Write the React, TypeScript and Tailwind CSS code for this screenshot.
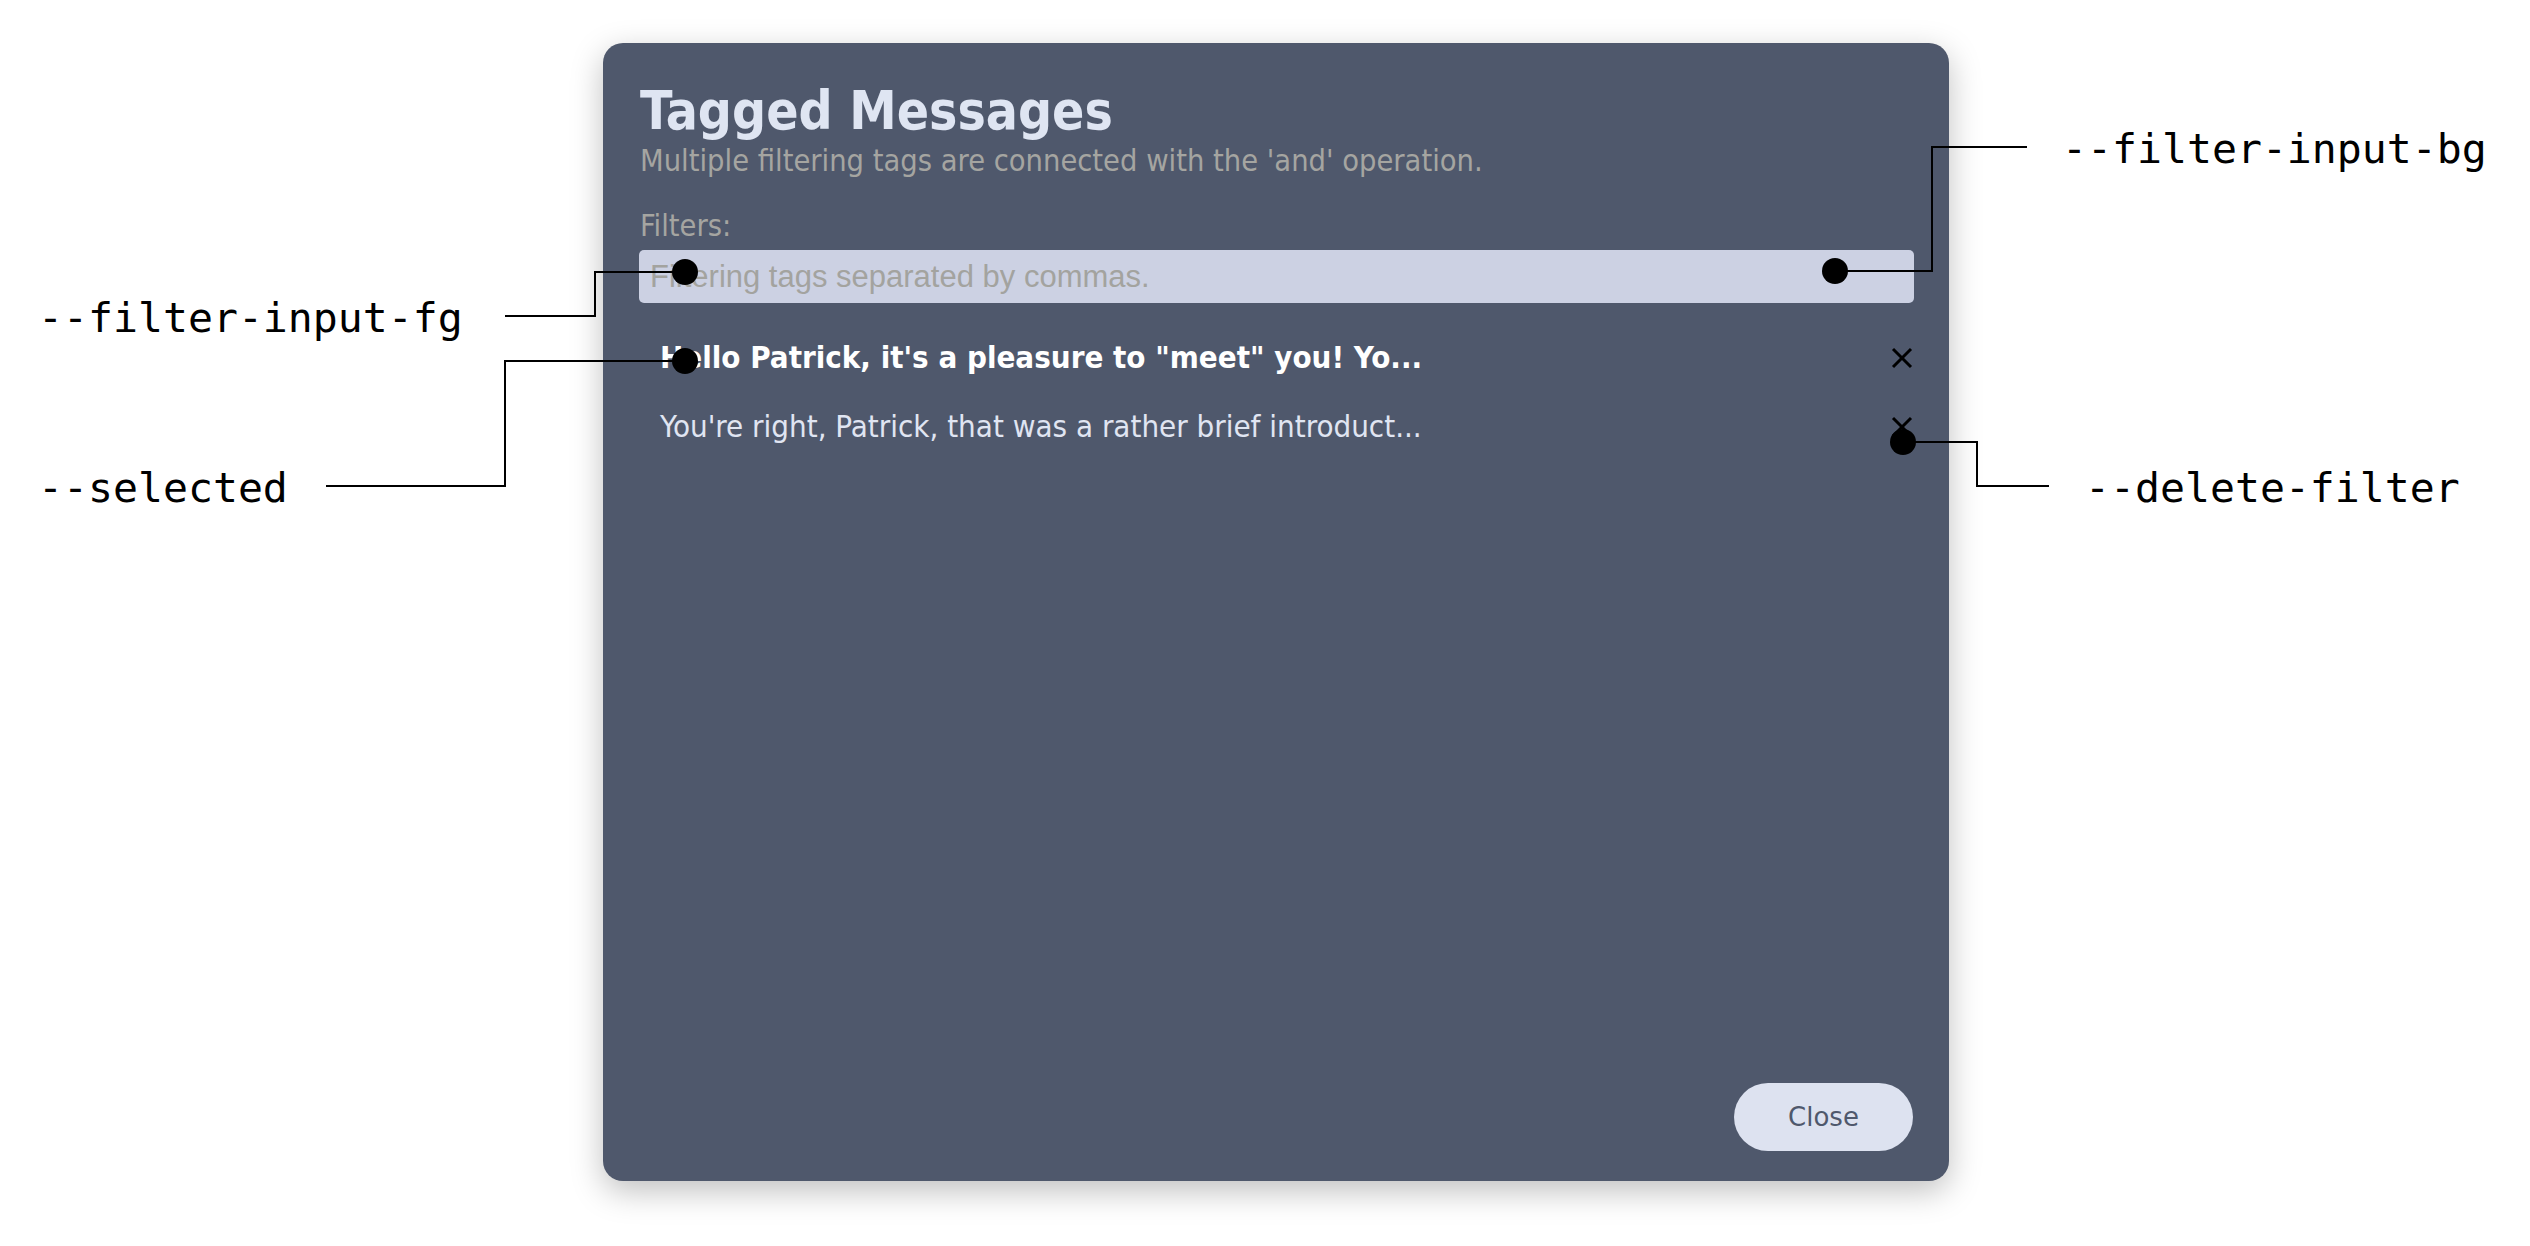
import React from "react";

const COND = "font-['DejaVu_Sans',sans-serif] [font-stretch:condensed]";

function XIcon() {
  return (
    <svg width="22" height="22" viewBox="0 0 22 22" className="block">
      <line x1="2" y1="2" x2="20" y2="20" stroke="#000" strokeWidth="3" />
      <line x1="20" y1="2" x2="2" y2="20" stroke="#000" strokeWidth="3" />
    </svg>
  );
}

function Row({ text, bold }: { text: string; bold?: boolean }) {
  return (
    <div className="flex h-[69px] items-center justify-between pl-[21px] pr-[1px]">
      <span
        className={`${COND} text-[31px] leading-[31px] whitespace-nowrap ${
          bold ? "font-bold text-white" : "text-[#e0e5f2]"
        }`}
      >
        {text}
      </span>
      <XIcon />
    </div>
  );
}

function Label({ text, left, top }: { text: string; left: number; top: number }) {
  return (
    <div
      className="absolute font-['DejaVu_Sans_Mono',monospace] text-[41.5px] leading-[41px] text-black whitespace-nowrap"
      style={{ left, top }}
    >
      {text}
    </div>
  );
}

export default function App() {
  return (
    <div className="relative w-[2530px] h-[1246px] bg-white overflow-hidden">
      <div className="pt-[43px] pl-[603px]">
        <div className="flex flex-col w-[1346px] h-[1138px] rounded-[20px] bg-[#4f586c] pl-[36px] pr-[35px] pt-[41px] pb-[30px] shadow-[0_10px_32px_rgba(0,0,0,0.25)]">
          <div className={`${COND} font-bold text-[53px] leading-[53px] text-[#dfe5f2] pl-[1px]`}>
            Tagged Messages
          </div>
          <div className={`${COND} mt-[9px] text-[30.5px] leading-[30.5px] text-[#a5a5a1] pl-[1px]`}>
            Multiple filtering tags are connected with the 'and' operation.
          </div>
          <div className={`${COND} mt-[34px] text-[30.5px] leading-[30.5px] text-[#a5a5a1] pl-[1px]`}>
            Filters:
          </div>
          <input
            className="mt-[9px] h-[53px] w-full rounded-[5px] bg-[#ccd1e3] px-[11px] font-['Liberation_Sans',sans-serif] text-[31px] text-[#333] placeholder:text-[#a3a39f] outline-none"
            placeholder="Filtering tags separated by commas."
          />
          <div className="mt-[20px] flex flex-col">
            <Row bold text={'Hello Patrick, it\'s a pleasure to "meet" you! Yo...'} />
            <Row text="You're right, Patrick, that was a rather brief introduct..." />
          </div>
          <div className="mt-auto flex justify-end pr-[1px]">
            <button className="h-[68px] w-[179px] rounded-full bg-[#dde2f0] font-['DejaVu_Sans',sans-serif] text-[26px] text-[#4f586c]">
              Close
            </button>
          </div>
        </div>
      </div>

      <svg className="absolute left-0 top-0 pointer-events-none" width="2530" height="1246">
        <g fill="none" stroke="#000" strokeWidth="2">
          <polyline points="1835,271 1932,271 1932,147 2027,147" />
          <polyline points="685,272 595,272 595,316 505,316" />
          <polyline points="685,361 505,361 505,486 326,486" />
          <polyline points="1903,442 1977,442 1977,486 2049,486" />
        </g>
        <g fill="#000">
          <circle cx="1835" cy="271" r="13" />
          <circle cx="685" cy="272" r="13" />
          <circle cx="685" cy="361" r="13" />
          <circle cx="1903" cy="442" r="13" />
        </g>
      </svg>

      <Label text="--filter-input-bg" left={2062} top={128} />
      <Label text="--filter-input-fg" left={38} top={297} />
      <Label text="--selected" left={38} top={467} />
      <Label text="--delete-filter" left={2085} top={467} />
    </div>
  );
}
